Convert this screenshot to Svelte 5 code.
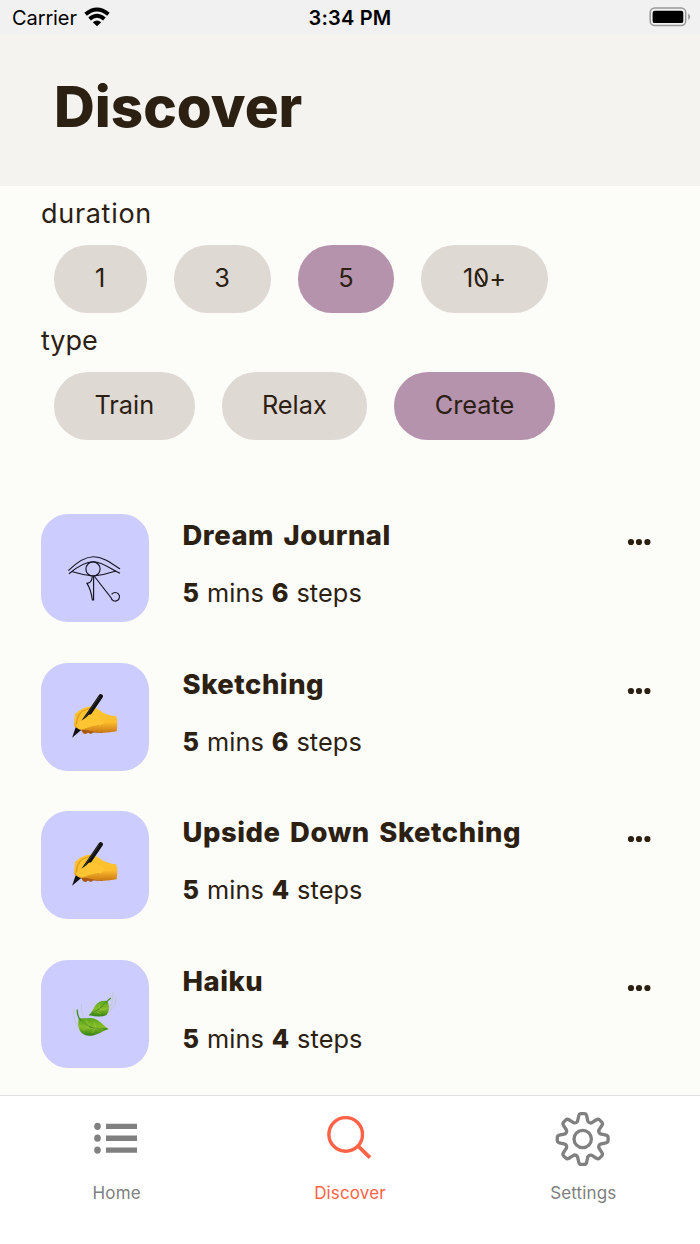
<script>
  let duration = $state('5');
  let type = $state('Create');

  const durations = [
    { name: '1', width: 92.5 },
    { name: '3', width: 97 },
    { name: '5', width: 96.7 },
    { name: '10+', width: 126.5 }
  ];

  const types = [
    { name: 'Train', width: 140.5 },
    { name: 'Relax', width: 145.7 },
    { name: 'Create', width: 160.7 }
  ];

  const activities = [
    { title: 'Dream Journal', icon: 'eye', mins: 5, steps: 6 },
    { title: 'Sketching', icon: 'hand', mins: 5, steps: 6 },
    { title: 'Upside Down Sketching', icon: 'hand', mins: 5, steps: 4 },
    { title: 'Haiku', icon: 'leaves', mins: 5, steps: 4 }
  ];

  // eight teeth around the centre of the settings icon
  function gearPath() {
    let d = '';
    for (let i = 0; i < 8; i++) {
      const a = (i * Math.PI) / 4;
      const p = (x, y) =>
        `${(x * Math.cos(a) - y * Math.sin(a)).toFixed(2)} ${(x * Math.sin(a) + y * Math.cos(a)).toFixed(2)}`;
      d += `${i ? 'L' : 'M'}${p(-5.2, -17.6)} L${p(-3.9, -23.3)} Q${p(-3.4, -25.4)} ${p(-1.6, -25.4)}`;
      d += `L${p(1.6, -25.4)} Q${p(3.4, -25.4)} ${p(3.9, -23.3)} L${p(5.2, -17.6)} Q${p(6.5, -15.7)} ${p(8.8, -16.1)}`;
    }
    return d + 'Z';
  }
</script>

<div class="screen">
  <div class="status">
    <div class="carrier">
      <span>Carrier</span>
      <svg width="26" height="20" viewBox="0 0 26 20">
        <g fill="none" stroke="#000" stroke-width="3.9">
          <path d="M1.6 7.3Q13 -2.4 24.4 7.3" />
          <path d="M5.6 12Q13 5.6 20.4 12" />
        </g>
        <path d="M8.8 15.2Q13 11.6 17.2 15.2L13 19.3Z" />
      </svg>
    </div>
    <span class="time">3:34 PM</span>
    <div class="power">
      <svg width="42" height="20" viewBox="0 0 42 20">
        <rect x="1.2" y="1" width="35.5" height="17.5" rx="4.5" fill="none" stroke="#999" stroke-width="1.5" />
        <rect x="3.6" y="3.7" width="30.7" height="12.4" rx="2.2" />
        <path d="M39.2 6.5Q41.2 8 41.2 9.8T39.2 13Z" fill="#999" />
      </svg>
    </div>
  </div>

  <header>
    <h1>Discover</h1>
  </header>

  <main>
    <h2 class="wide">duration</h2>
    <div class="pills">
      {#each durations as item}
        <button class:selected={duration === item.name} style:width="{item.width}px" onclick={() => (duration = item.name)}>
          {#if item.name === '10+'}1<span class="zero">0</span>+{:else}{item.name}{/if}
        </button>
      {/each}
    </div>
    <h2>type</h2>
    <div class="pills">
      {#each types as item}
        <button class:selected={type === item.name} style:width="{item.width}px" onclick={() => (type = item.name)}>{item.name}</button>
      {/each}
    </div>

    <div class="list">
      {#each activities as item}
        <div class="activity">
          <div class="thumb">
            <svg width="108" height="108" viewBox="0 0 108 108">
              {#if item.icon === 'eye'}
                <g fill="none" stroke="#151520" stroke-width="1.15">
                  <path d="M27.3 56.7C36 48 44 42.7 52.5 42.7C62 42.7 70 49 79 54.8" />
                  <path d="M28 59.7C37 52 44 47.7 52.5 47.7C61 47.7 70 55 79 59.3" />
                  <path d="M30.5 57.5Q42 61 52.3 62Q64 60.7 75 57" />
                  <circle cx="52" cy="55" r="7.1" />
                  <path d="M52.6 62V86H51.4C50.6 80 49 74 46 69.4Q50.8 68.8 51.2 63" />
                  <path d="M53.5 62.5L70 83.7A4.3 4.3 0 1 0 70.6 80.4" />
                </g>
              {:else if item.icon === 'hand'}
                <defs>
                  <linearGradient id="skin" x2="0" y2="1">
                    <stop offset="0" stop-color="#ffc832" />
                    <stop offset=".6" stop-color="#fdbd2c" />
                    <stop offset="1" stop-color="#c97812" />
                  </linearGradient>
                </defs>
                <path d="M38 64L42 70Q45 72 47 69.5Q50 72 52 69.5L62 70L58 60Z" fill="#a95712" />
                <path d="M34 51Q41 44 49 43.5Q54 43.5 58 47Q66 53 75.3 53.2Q77 60 75.6 68.2Q63 71 52 68.5L41 66Q36 67 33.3 63Q33.2 56 34 51Z" fill="url(#skin)" />
                <path d="M35.5 61Q35.5 53 41 48.5L49 45" fill="none" stroke="#e29d1c" stroke-width="1.2" />
                <path d="M59.8 33.3L38.5 64.5" stroke="#111" stroke-width="4.4" stroke-linecap="round" />
                <path d="M34.6 64.5L40.2 67L31.1 74.8Z" fill="#111" />
                <path d="M58.2 33.6L44 54.5" stroke="#4b4b50" stroke-width=".6" />
                <path d="M35 62.5C38.5 57 44 56.5 47.5 51.9C53 50 62 55.5 64 58.5C61 64 50 63.5 42 66.6Q36.5 67.5 35 62.5Z" fill="#ffc431" />
                <path d="M42 66.6Q51 63.3 58 62.5" fill="none" stroke="#df9a20" stroke-width="1" />
              {:else}
                <defs>
                  <linearGradient id="leaf" x2="0" y2="1">
                    <stop offset="0" stop-color="#58a51d" />
                    <stop offset=".5" stop-color="#87bd26" />
                    <stop offset="1" stop-color="#328016" />
                  </linearGradient>
                </defs>
                <g fill="none" stroke="#c3c7d3" stroke-width="1">
                  <path d="M33 49Q31.5 59 37 66M40.5 44Q39.5 53 44 58" />
                  <path d="M71.5 32Q73.5 42 67 50M75 36Q75.5 45 69 51" />
                </g>
                <path d="M38 58Q43 58.5 49 58C58 58 61 65 67.7 69C61 71 59 74 52 75.4Q43 77 39 71Q36 66 38 58Z" fill="url(#leaf)" />
                <path d="M36.2 49.5Q36 55 38.5 59Q45 66 53 68.5L66.5 69" fill="none" stroke="#438d1b" stroke-width="1.3" />
                <path d="M40 61L50 68.5L62 69M45 60L48 66M42 70L48 67M53 62L55 68M51 73L54 69" fill="none" stroke="#a2c842" stroke-width=".6" />
                <path d="M48.3 55.3Q52 50 54 46Q58 40 66.5 41Q70 50 65.5 55Q60 58 48.3 55.3Z" fill="url(#leaf)" />
                <path d="M69.8 38L66 41.3Q60 49 48.3 55.3" fill="none" stroke="#438d1b" stroke-width="1.2" />
                <path d="M65 43Q61 49 53 53M58 44L59 49M65 49L59 50M60 54L56 52" fill="none" stroke="#a2c842" stroke-width=".5" />
              {/if}
            </svg>
          </div>
          <div class="details">
            <h3>{item.title}</h3>
            <p><b>{item.mins}</b> mins <b>{item.steps}</b> steps</p>
          </div>
          <svg class="more" width="24" height="8" viewBox="0 0 24 8">
            <circle cx="4" cy="4" r="3.1" /><circle cx="12" cy="4" r="3.1" /><circle cx="20.4" cy="4" r="3.1" />
          </svg>
        </div>
      {/each}
    </div>
  </main>

  <nav>
    <div class="tab">
      <svg width="56" height="56" viewBox="-28 -28 56 56" fill="#808080">
        <ellipse cx="-19.5" cy="-12.7" rx="3.3" ry="3.6" />
        <ellipse cx="-19.5" cy="-.8" rx="3.3" ry="3.6" />
        <ellipse cx="-19.5" cy="11.1" rx="3.3" ry="3.6" />
        <path d="M-11 -15.3h31v5.3h-31zM-11 -3.4h31v5.3h-31zM-11 8.5h31v5.3h-31z" />
      </svg>
      <span>Home</span>
    </div>
    <div class="tab active">
      <svg width="56" height="56" viewBox="-28 -28 56 56" fill="none" stroke="tomato" stroke-width="3.4">
        <circle cx="-4.3" cy="-4.6" r="16.8" />
        <path d="M8 7L20 18.7" stroke-width="3.8" />
      </svg>
      <span>Discover</span>
    </div>
    <div class="tab">
      <svg width="56" height="56" viewBox="-27.7 -28 56 56" fill="none" stroke="#808080" stroke-width="3.3" stroke-linejoin="round">
        <path d={gearPath()} />
        <circle r="8.7" />
      </svg>
      <span>Settings</span>
    </div>
  </nav>
</div>

<style>
:global(body) {
  background: #fcfcf8;
}
.screen {
  width: 700px;
  height: 1244px;
  display: flex;
  flex-direction: column;
  overflow: hidden;
  color: #2b2012;
  background: #fcfcf8;
  font-family: Inter, "Liberation Sans", sans-serif;
}
.status {
  height: 33.5px;
  flex: none;
  padding: 0 9px 0 12px;
  display: grid;
  grid-template-columns: 1fr auto 1fr;
  align-items: center;
  box-sizing: border-box;
  color: #000;
  background: #f1f1f1;
  font-size: 20px;
}
.carrier {
  display: flex;
  align-items: center;
  gap: 7px;
  padding-top: 2px;
  letter-spacing: -0.1px;
}
.carrier svg {
  margin-top: -1px;
}
.time {
  padding: 2px 3px 0 0;
  font-weight: 600;
  letter-spacing: 0.2px;
}
.power {
  display: flex;
  justify-content: flex-end;
}
header {
  height: 152.5px;
  flex: none;
  padding: 38px 54px 0;
  box-sizing: border-box;
  background: #f5f3f0;
}
h1 {
  margin: 0;
  font-size: 56.5px;
  line-height: 70px;
  font-weight: 800;
}
main {
  flex: 1;
  min-height: 0;
  padding: 0 41px;
  overflow: hidden;
}
h2 {
  height: 59.4px;
  margin: 0;
  line-height: 56px;
  font-size: 27px;
  font-weight: 400;
}
.wide {
  letter-spacing: 0.7px;
}
.pills {
  height: 67.5px;
  display: flex;
  gap: 27px;
  padding-left: 13px;
}
button {
  height: 67.5px;
  padding: 0 0 3px;
  border: 0;
  border-radius: 33.75px;
  color: #2b2012;
  background: #dfd9d4;
  font: inherit;
  font-size: 25.3px;
}
.selected {
  background: #b693ad;
}
/* the zero is slashed from top left to bottom right */
.zero {
  position: relative;
}
.zero::after {
  content: '';
  position: absolute;
  left: calc(50% - 1px);
  top: calc(50% - 8px);
  width: 2px;
  height: 17px;
  background: #2b2012;
  transform: rotate(-32deg);
}
.list {
  display: flex;
  flex-direction: column;
  gap: 40.7px;
  padding-top: 74.1px;
}
.activity {
  height: 108px;
  display: flex;
}
.thumb {
  width: 108px;
  height: 108px;
  border-radius: 27px;
  background: #ccccff;
}
.details {
  flex: 1;
  padding-left: 33.5px;
}
h3 {
  margin: 3px 0 0;
  line-height: 36px;
  font-size: 27.4px;
  font-weight: 800;
  letter-spacing: 0.55px;
  word-spacing: 3px;
}
p {
  margin: 22px 0 0;
  line-height: 35px;
  font-size: 25.3px;
  letter-spacing: 0.1px;
  word-spacing: 0.6px;
}
b {
  font-weight: 800;
}
.more {
  margin: 24px 8px 0 0;
  fill: #2b2012;
}
nav {
  height: 149px;
  flex: none;
  display: grid;
  grid-template-columns: repeat(3, 1fr);
  box-sizing: border-box;
  border-top: 1px solid #e0e0e0;
  background: #fff;
}
.tab {
  display: flex;
  flex-direction: column;
  align-items: center;
  padding-top: 15px;
  color: #808080;
  font-size: 17px;
  letter-spacing: 0.15px;
}
.tab span {
  margin-top: 16px;
  line-height: 20px;
}
.active {
  color: tomato;
}
</style>
